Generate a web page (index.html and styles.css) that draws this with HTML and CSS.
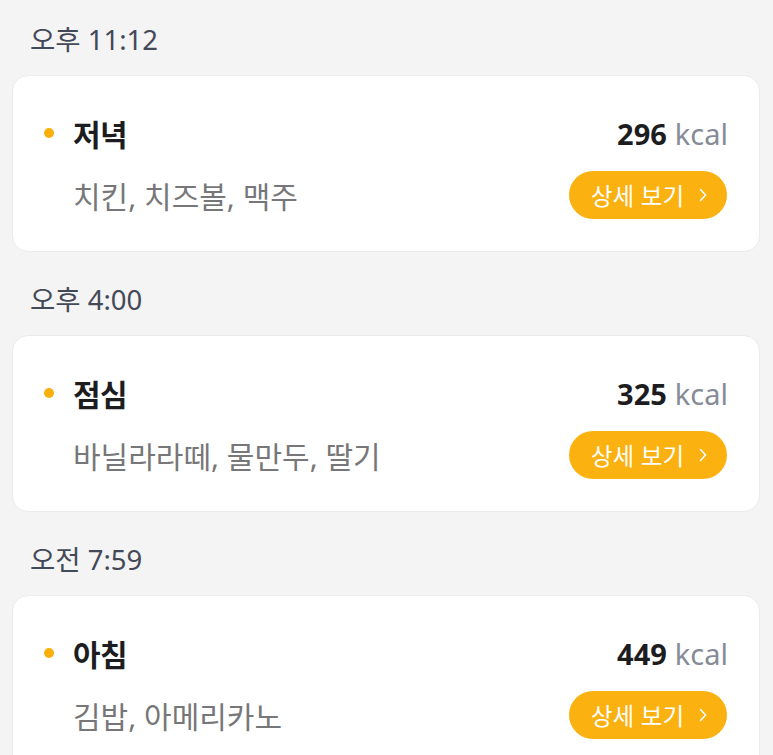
FILE: index.html
```html
<!DOCTYPE html>
<html lang="ko">
<head>
<meta charset="utf-8">
<link rel="stylesheet" href="styles.css">
</head>
<body>
<main class="list">
  <section class="group">
    <div class="time">오후 11:12</div>
    <div class="card">
      <div class="row">
        <div class="title"><span class="dot"></span>저녁</div>
        <div class="kcal"><b>296</b><span>kcal</span></div>
      </div>
      <div class="row">
        <div class="foods">치킨, 치즈볼, 맥주</div>
        <button class="btn">상세 보기<svg class="chev" viewBox="0 0 8 14" width="8" height="14"><path d="M1.5 1.5 L6.5 7 L1.5 12.5" fill="none" stroke="#fff" stroke-width="1.6" stroke-linecap="round" stroke-linejoin="round"/></svg></button>
      </div>
    </div>
  </section>
  <section class="group">
    <div class="time">오후 4:00</div>
    <div class="card">
      <div class="row">
        <div class="title"><span class="dot"></span>점심</div>
        <div class="kcal"><b>325</b><span>kcal</span></div>
      </div>
      <div class="row">
        <div class="foods">바닐라라떼, 물만두, 딸기</div>
        <button class="btn">상세 보기<svg class="chev" viewBox="0 0 8 14" width="8" height="14"><path d="M1.5 1.5 L6.5 7 L1.5 12.5" fill="none" stroke="#fff" stroke-width="1.6" stroke-linecap="round" stroke-linejoin="round"/></svg></button>
      </div>
    </div>
  </section>
  <section class="group">
    <div class="time">오전 7:59</div>
    <div class="card">
      <div class="row">
        <div class="title"><span class="dot"></span>아침</div>
        <div class="kcal"><b>449</b><span>kcal</span></div>
      </div>
      <div class="row">
        <div class="foods">김밥, 아메리카노</div>
        <button class="btn">상세 보기<svg class="chev" viewBox="0 0 8 14" width="8" height="14"><path d="M1.5 1.5 L6.5 7 L1.5 12.5" fill="none" stroke="#fff" stroke-width="1.6" stroke-linecap="round" stroke-linejoin="round"/></svg></button>
      </div>
    </div>
  </section>
</main>
</body>
</html>
```
FILE: styles.css
```css
html, body {
  margin: 0;
  padding: 0;
  background: #f4f4f5;
  font-family: "Noto Sans", "Noto Sans CJK KR", sans-serif;
}
.list {
  padding: 22px 13px 0 12px;
  display: flex;
  flex-direction: column;
  gap: 30px;
}
.group {
  display: flex;
  flex-direction: column;
  gap: 17px;
}
.time {
  padding-left: 18px;
  font-size: 27.5px;
  line-height: 36px;
  height: 36px;
  color: #444957;
}
.card {
  background: #fff;
  border: 1px solid #ebebec;
  border-radius: 16px;
  padding: 37px 31px 32px 31px;
  display: flex;
  flex-direction: column;
  gap: 18px;
}
.row {
  display: flex;
  align-items: center;
  justify-content: space-between;
}
.row:first-child {
  height: 40px;
}
.title {
  display: flex;
  align-items: center;
  font-size: 30px;
  font-weight: 700;
  color: #1d1d1f;
  letter-spacing: -0.5px;
}
.dot {
  width: 10px;
  height: 10px;
  border-radius: 50%;
  background: #f9b00d;
  margin-right: 19px;
}
.kcal {
  font-size: 29px;
  display: flex;
  align-items: baseline;
  gap: 8px;
}
.kcal b {
  font-weight: 700;
  color: #1d1d1f;
}
.kcal span {
  color: #878b98;
  font-weight: 400;
}
.foods {
  padding-left: 29px;
  font-size: 30px;
  color: #777779;
}
.btn {
  height: 48px;
  width: 158px;
  border: none;
  border-radius: 24px;
  background: #fbb10f;
  color: #fff;
  font-family: "Noto Sans CJK KR", sans-serif;
  font-size: 23.5px;
  display: flex;
  align-items: center;
  justify-content: center;
  gap: 15px;
  padding: 0 0 0 2px;
  margin-right: 1px;
}
.chev {
  display: block;
}
```
